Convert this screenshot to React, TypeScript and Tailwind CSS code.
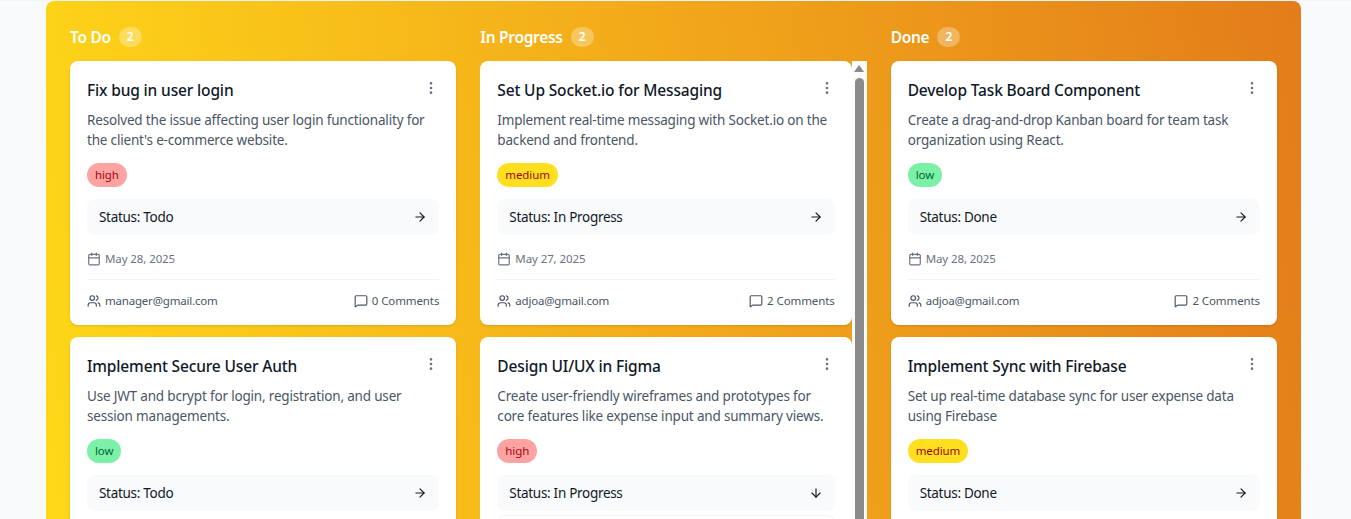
import { ArrowDown, ArrowRight, Calendar, EllipsisVertical, MessageSquare, Users } from "lucide-react";

type Task = {
  title: string;
  desc: string[];
  priority: "high" | "medium" | "low";
  status: string;
  date: string;
  user: string;
  comments: string;
  open?: boolean;
};

const badge = {
  high: "bg-red-300 text-red-800",
  medium: "bg-yellow-300 text-red-800",
  low: "bg-green-300 text-green-800",
};

const todo: Task[] = [
  {
    title: "Fix bug in user login",
    desc: ["Resolved the issue affecting user login functionality for", "the client's e-commerce website."],
    priority: "high",
    status: "Todo",
    date: "May 28, 2025",
    user: "manager@gmail.com",
    comments: "0 Comments",
  },
  {
    title: "Implement Secure User Auth",
    desc: ["Use JWT and bcrypt for login, registration, and user", "session managements."],
    priority: "low",
    status: "Todo",
    date: "May 28, 2025",
    user: "manager@gmail.com",
    comments: "0 Comments",
  },
];

const progress: Task[] = [
  {
    title: "Set Up Socket.io for Messaging",
    desc: ["Implement real-time messaging with Socket.io on the", "backend and frontend."],
    priority: "medium",
    status: "In Progress",
    date: "May 27, 2025",
    user: "adjoa@gmail.com",
    comments: "2 Comments",
  },
  {
    title: "Design UI/UX in Figma",
    desc: ["Create user-friendly wireframes and prototypes for", "core features like expense input and summary views."],
    priority: "high",
    status: "In Progress",
    date: "May 27, 2025",
    user: "adjoa@gmail.com",
    comments: "2 Comments",
    open: true,
  },
];

const done: Task[] = [
  {
    title: "Develop Task Board Component",
    desc: ["Create a drag-and-drop Kanban board for team task", "organization using React."],
    priority: "low",
    status: "Done",
    date: "May 28, 2025",
    user: "adjoa@gmail.com",
    comments: "2 Comments",
  },
  {
    title: "Implement Sync with Firebase",
    desc: ["Set up real-time database sync for user expense data", "using Firebase"],
    priority: "medium",
    status: "Done",
    date: "May 28, 2025",
    user: "adjoa@gmail.com",
    comments: "2 Comments",
  },
];

const Card = ({ task }: { task: Task }) => {
  return (
    <div className="bg-white rounded-lg shadow-sm px-[17px] pt-[17px] pb-[16px]">
      <div className="flex justify-between items-start">
        <h3 className="text-[15.5px] leading-[24px] font-medium text-gray-900 tracking-[-0.15px]">{task.title}</h3>
        <EllipsisVertical size={16} className="text-gray-500 mt-[2px]" />
      </div>
      <p className="mt-[8px] text-[13.5px] leading-[20px] text-gray-600 tracking-[-0.18px] whitespace-nowrap">
        {task.desc[0]}
        <br />
        {task.desc[1]}
      </p>
      <span className={`inline-block mt-[13px] rounded-full px-[8px] text-[11.5px] leading-[24px] tracking-[-0.1px] ${badge[task.priority]}`}>
        {task.priority}
      </span>
      <div className="mt-[12px] h-[36px] rounded-lg bg-gray-50 flex items-center justify-between px-[12px]">
        <span className="text-[13.5px] text-gray-900 tracking-[-0.3px]">Status: {task.status}</span>
        {task.open ? <ArrowDown size={14} className="text-gray-900" /> : <ArrowRight size={14} className="text-gray-900" />}
      </div>
      {task.open && <div className="mt-[4px] h-[80px] rounded-lg border border-gray-100 bg-white" />}
      <div className="mt-[16px] flex items-center gap-[4px] text-[11.5px] leading-[16px] text-gray-500 tracking-[-0.1px]">
        <Calendar size={14} />
        {task.date}
      </div>
      <div className="mt-[12px] border-t border-gray-100 pt-[13px] flex justify-between text-[11.5px] leading-[16px] text-gray-600">
        <div className="flex items-center gap-[4px] tracking-[-0.2px]">
          <Users size={14} />
          {task.user}
        </div>
        <div className="flex items-center gap-[4px] tracking-[-0.1px]">
          <MessageSquare size={14} />
          {task.comments}
        </div>
      </div>
    </div>
  );
};

const ColumnHead = ({ title }: { title: string }) => {
  return (
    <div className="flex items-center gap-[8px] h-[24px] mb-[12px]">
      <h2 className="pt-px text-[15.5px] font-semibold text-white tracking-[-0.3px]">{title}</h2>
      <span className="w-[23px] h-[20px] rounded-full bg-white/30 text-white text-[12px] font-semibold flex items-center justify-center">
        2
      </span>
    </div>
  );
};

const Scrollbar = () => {
  return (
    <div className="w-[15px] bg-[#fbfbfb] flex flex-col items-center shrink-0">
      <div className="mt-[4px] w-0 h-0 border-l-[5px] border-r-[5px] border-b-[7px] border-l-transparent border-r-transparent border-b-[#8b8b8b]" />
      <div className="mt-[6px] w-[9px] h-[800px] rounded-t-full bg-[#8b8b8b]" />
    </div>
  );
};

export default function App() {
  return (
    <div className="h-screen overflow-hidden bg-gray-50 font-['Noto_Sans',sans-serif]">
      <div className="h-px bg-gray-100" />
      <div className="mx-[46px] h-[820px] rounded-lg bg-linear-80 from-[#ffdc18] to-[#e37c1a] p-[24px] grid grid-cols-3 gap-[24px] w-[1255px]">
        <div className="min-w-0">
          <ColumnHead title="To Do" />
          <div className="flex flex-col gap-[12px]">
            {todo.map((t) => (
              <Card key={t.title} task={t} />
            ))}
          </div>
        </div>
        <div className="min-w-0">
          <ColumnHead title="In Progress" />
          <div className="flex overflow-hidden">
            <div className="flex-1 min-w-0 flex flex-col gap-[12px]">
              {progress.map((t) => (
                <Card key={t.title} task={t} />
              ))}
            </div>
            <Scrollbar />
          </div>
        </div>
        <div className="min-w-0">
          <ColumnHead title="Done" />
          <div className="flex flex-col gap-[12px]">
            {done.map((t) => (
              <Card key={t.title} task={t} />
            ))}
          </div>
        </div>
      </div>
    </div>
  );
}
